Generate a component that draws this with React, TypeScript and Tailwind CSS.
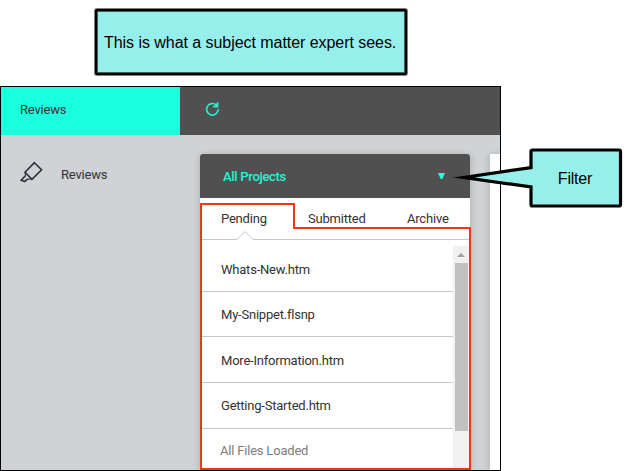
const files = [
  { name: "Whats-New.htm", row: "h-[46px] pt-[1px]" },
  { name: "My-Snippet.flsnp", row: "h-[45px] pt-[1px]" },
  { name: "More-Information.htm", row: "h-[46px] pt-[1px]" },
  { name: "Getting-Started.htm", row: "h-[46px] pb-[1px]" },
];

function Highlighter() {
  return (
    <svg width="24" height="24" viewBox="0 0 24 24" fill="none" stroke="#2e2e38" strokeWidth="1.6" className="block">
      <path d="M14.4 2.7 L21.6 9.7 L12 19.3 L5 12.2 Z" />
      <path d="M5.4 15.8 L1.2 20.2 L4.6 21.6 L7.9 18.8" />
      <path d="M5 12.2 L5.6 16 M8 19 L12 19.3" strokeWidth="1" />
    </svg>
  );
}

function Header() {
  return (
    <header className="flex h-12 bg-[#505050]">
      <div className="flex w-[179px] items-center bg-[#1bffdf] pl-[19px] pb-[3px]">Reviews</div>
      <svg width="16" height="16" viewBox="0 0 16 16" fill="none" stroke="#20f0d0" strokeWidth="1.7" className="mt-[14px] ml-6">
        <path d="M12.5 4.2 A5.8 5.8 0 1 0 14.2 8.2" />
        <path d="M13.6 1.2 V5.6 H9" />
        <path d="M13.4 1.8 V5.5 H9.6 Z" fill="#20f0d0" stroke="none" />
      </svg>
    </header>
  );
}

function Panel() {
  return (
    <section className="relative mt-[19px] flex w-[270px] flex-col rounded-t-[3px] bg-white shadow-[0_1px_7px_rgba(0,0,0,0.2)]">
      <div className="flex h-11 shrink-0 items-center justify-between rounded-t-[3px] bg-[#505050] pr-[25px] pl-[23px] text-[#27f3d4]">
        <span className="font-medium tracking-[-0.3px]">All Projects</span>
        <svg width="7" height="6" viewBox="0 0 7 6" className="mb-[1px]">
          <path d="M0 0 H7 L4.2 6 H2.8 Z" fill="#27ffdf" />
        </svg>
      </div>
      <div className="relative flex h-[42px] shrink-0 border-b border-[#c7c7c7] pl-[21px]">
        <span className="mt-[12px] w-[87px]">Pending</span>
        <span className="mt-[12px] w-[99px]">Submitted</span>
        <span className="mt-[12px]">Archive</span>
        <svg width="18" height="10" viewBox="0 0 18 10" className="absolute top-[33px] left-9">
          <path d="M1 8.5 L8.5 1 H9.5 L17 8.5 V10 H1 Z" fill="white" />
          <path d="M0 8.5 H1 L8.2 1 H9.8 L17 8.5 H18" fill="none" stroke="#c7c7c7" />
        </svg>
      </div>
      <div className="flex min-h-0 flex-1 pt-[6px]">
        <div className="w-[253px]">
          {files.map((f) => (
            <div key={f.name} className={`${f.row} flex items-center border-b border-[#c7c7c7] pl-[21px] tracking-[-0.22px]`}>
              {f.name}
            </div>
          ))}
          <div className="pt-[13px] pl-5 text-[#7d7d7d]">All Files Loaded</div>
        </div>
        <div className="flex w-4 flex-col items-center bg-[#f1f1f1]">
          <svg width="8" height="4" viewBox="0 0 8 4" className="mt-[7px] mb-[6px] shrink-0">
            <path d="M4 0 L8 4 H0 Z" fill="#a0a0a0" />
          </svg>
          <div className="h-[168px] w-[13px] bg-[#c1c1c1]" />
        </div>
      </div>
      <svg width="271" height="267" viewBox="0 0 271 267" className="absolute top-[49px] left-0">
        <path d="M1 1 H94 V25 H270 V266 H1 Z" fill="none" stroke="#e63b1b" strokeWidth="2" />
      </svg>
    </section>
  );
}

function FilterCallout() {
  return (
    <div className="absolute top-[146px] left-[450px] h-[64px] w-[174px]">
      <svg width="174" height="64" viewBox="0 0 174 64" className="absolute">
        <path
          d="M82 4 H169 Q170.5 4 170.5 5.5 V58.5 Q170.5 60 169 60 H82.5 Q81 60 81 58.5 V41 L14 31.5 L81 21.5 V5.5 Q81 4 82.5 4 Z"
          fill="#97efec" stroke="black" strokeWidth="3.2" strokeLinejoin="miter" strokeMiterlimit="8"
        />
      </svg>
      <span className="relative flex h-full items-center justify-center pt-[2px] pl-[76px] text-base text-black font-['Liberation_Sans',sans-serif]">
        Filter
      </span>
    </div>
  );
}

export default function App() {
  return (
    <main className="relative flex h-[471px] w-[630px] flex-col overflow-hidden bg-white text-[13px] leading-[17px] tracking-[-0.2px] text-[#333] font-[Roboto,sans-serif]">
      <div className="h-[86px] shrink-0 pt-[9px] pl-[95px]">
        <div className="flex h-[66px] w-[312px] items-center rounded-[2px] border-2 border-black bg-[#97efec] pt-[2px] pl-[7px] text-base tracking-[-0.05px] whitespace-nowrap text-black font-['Liberation_Sans',sans-serif] shadow-[0_0_0_1px_rgba(0,0,0,0.5),inset_0_0_0_1px_rgba(0,0,0,0.6)]">
          This is what a subject matter expert sees.
        </div>
      </div>
      <div className="flex h-[385px] w-[501px] flex-col overflow-hidden border border-black bg-[#cfd3d6]">
        <Header />
        <div className="flex min-h-0 flex-1">
          <nav className="flex w-[199px] shrink-0 gap-[17px] pt-[25px] pl-[19px]">
            <Highlighter />
            <span className="pt-[6px]">Reviews</span>
          </nav>
          <Panel />
          <div className="mt-[19px] ml-5 flex-1 bg-white shadow-[0_1px_7px_rgba(0,0,0,0.2)]" />
        </div>
      </div>
      <FilterCallout />
    </main>
  );
}
